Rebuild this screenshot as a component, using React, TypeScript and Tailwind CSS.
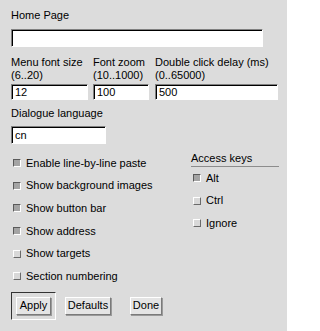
import React from "react";

function Field({ value, className }: { value?: string; className: string }) {
  return (
    <div
      className={
        "flex items-center bg-white border border-t-[#808080] border-l-[#808080] border-b-white border-r-white shadow-[inset_1px_1px_0_#000] pl-[3px] " +
        className
      }
    >
      {value}
    </div>
  );
}

function Check({ label, on }: { label: string; on?: boolean }) {
  return (
    <div className="h-[22.6px] flex items-center gap-[5px]">
      {on ? (
        <span className="w-[8px] h-[8px] bg-[#a4a4a4] border border-t-[#5a5a5a] border-l-[#5a5a5a] border-b-white border-r-white" />
      ) : (
        <span className="w-[8px] h-[8px] bg-[#d8d8d8] border border-t-white border-l-white border-b-[#6a6a6a] border-r-[#6a6a6a]" />
      )}
      <span>{label}</span>
    </div>
  );
}

function Btn({ label, className }: { label: string; className: string }) {
  return (
    <div
      className={
        "h-[18px] flex items-center justify-center bg-[#e4e4e4] border border-t-white border-l-white border-b-[#7a7a7a] border-r-[#7a7a7a] shadow-[1px_1px_0_#9a9a9a] " +
        className
      }
    >
      {label}
    </div>
  );
}

export default function App() {
  const opts = [
    { label: "Enable line-by-line paste", on: true },
    { label: "Show background images", on: true },
    { label: "Show button bar", on: true },
    { label: "Show address", on: true },
    { label: "Show targets", on: false },
    { label: "Section numbering", on: false },
  ];

  const keys = [
    { label: "Alt", on: true },
    { label: "Ctrl", on: false },
    { label: "Ignore", on: false },
  ];

  return (
    <div className="w-[287px] h-[331px] bg-[#dcdcdc] text-black text-[11px] leading-[13px] font-['Liberation_Sans',Arial,sans-serif] pl-[11px] pt-[9px]">
      <div>Home Page</div>
      <Field className="mt-[7px] w-[252px] h-[18px]" />

      {/* numeric settings */}
      <div className="mt-[9px] flex">
        <div className="w-[77px]">
          <div>Menu font size</div>
          <div>(6..20)</div>
          <Field value="12" className="mt-[2px] h-[16px]" />
        </div>
        <div className="w-[56px] ml-[5px]">
          <div>Font zoom</div>
          <div>(10..1000)</div>
          <Field value="100" className="mt-[2px] h-[16px]" />
        </div>
        <div className="w-[123px] ml-[6px]">
          <div className="whitespace-nowrap">Double click delay (ms)</div>
          <div>(0..65000)</div>
          <Field value="500" className="mt-[2px] h-[16px]" />
        </div>
      </div>

      <div className="mt-[7px]">Dialogue language</div>
      <Field value="cn" className="mt-[6px] w-[95px] h-[18px]" />

      {/* toggles */}
      <div className="mt-[8px] flex">
        <div className="pl-[2px] w-[180px]">
          {opts.map((o) => (
            <Check key={o.label} label={o.label} on={o.on} />
          ))}
        </div>
        <div className="w-[88px]">
          <div className="h-[15px] border-b border-[#8c8c8c]">Access keys</div>
          <div className="pl-[2px]">
            {keys.map((k) => (
              <Check key={k.label} label={k.label} on={k.on} />
            ))}
          </div>
        </div>
      </div>

      {/* buttons */}
      <div className="mt-[4px] flex items-center">
        <div className="w-[45px] h-[28px] p-[4px] border border-t-[#333] border-l-[#333] border-b-white border-r-white">
          <Btn label="Apply" className="w-[35px]" />
        </div>
        <Btn label="Defaults" className="ml-[9px] w-[46px]" />
        <Btn label="Done" className="ml-[19px] w-[32px]" />
      </div>
    </div>
  );
}
